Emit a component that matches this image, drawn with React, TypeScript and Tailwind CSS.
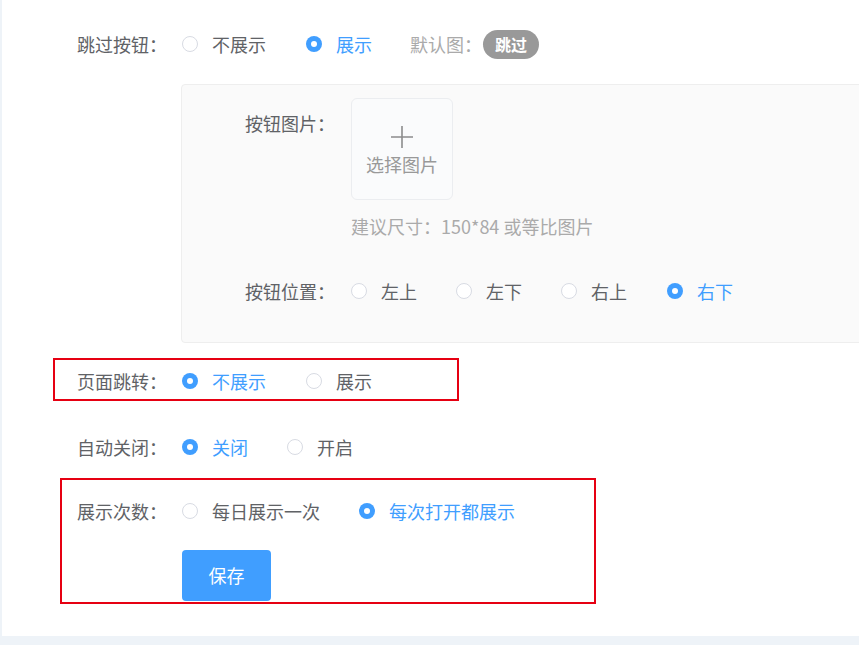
import React from "react";

const FONT = { fontFamily: '"Noto Sans CJK SC", "Noto Sans", sans-serif' };

function Radio({ checked, label }: { checked?: boolean; label: string }) {
  return (
    <div className="flex items-center">
      {checked ? (
        <span className="w-4 h-4 rounded-full bg-[#409eff] flex items-center justify-center">
          <span className="w-[6px] h-[6px] rounded-full bg-white" />
        </span>
      ) : (
        <span className="w-4 h-4 rounded-full border border-[#d8dbe3] bg-white" />
      )}
      <span className={`ml-[14px] text-[18px] leading-6 ${checked ? "text-[#409eff]" : "text-[#606266]"}`}>{label}</span>
    </div>
  );
}

function Row({ label, children }: { label: string; children: React.ReactNode }) {
  return (
    <div className="flex items-center h-10">
      <div className="w-[105px] text-[18px] text-[#606266]">{label}</div>
      {children}
    </div>
  );
}

export default function App() {
  return (
    <div className="w-[859px] h-[645px] bg-[#eef3f8] pl-[2px] pb-[9px]" style={FONT}>
      <div className="h-full bg-white overflow-hidden pl-[75px] pt-6">
        <Row label="跳过按钮：">
          <div className="flex items-center">
            <div className="w-[124px]"><Radio label="不展示" /></div>
            <div className="w-[104px]"><Radio checked label="展示" /></div>
            <span className="text-[18px] text-[#aaaaaa]">默认图：</span>
            <span className="ml-[1px] w-[56px] h-[29px] rounded-full bg-[#999999] text-white text-[16px] font-bold flex items-center justify-center">跳过</span>
          </div>
        </Row>

        <div className="ml-[104px] mt-5 -mr-4 h-[259px] bg-[#fafafa] border border-[#eeeeee] rounded-[4px] pl-[63px] pt-[13px]">
          <div className="flex">
            <div className="w-[106px] pt-[13px] text-[18px] leading-6 text-[#606266]">按钮图片：</div>
            <div>
              <div className="w-[102px] h-[102px] bg-[#fafbfc] border border-[#ebedf0] rounded-[6px] flex flex-col items-center justify-center">
                <svg width="24" height="24" viewBox="0 0 24 24" className="mt-[2px]">
                  <path d="M12 1v22M1 12h22" stroke="#8c8c8c" strokeWidth="1.6" />
                </svg>
                <span className="mt-[3px] text-[18px] leading-6 text-[#999999]">选择图片</span>
              </div>
              <div className="mt-[14px] text-[18px] leading-6 text-[#aaaaaa]">建议尺寸：150*84 或等比图片</div>
            </div>
          </div>
          <div className="flex items-center h-10 mt-[33px]">
            <div className="w-[106px] text-[18px] text-[#606266]">按钮位置：</div>
            <div className="w-[105px]"><Radio label="左上" /></div>
            <div className="w-[105px]"><Radio label="左下" /></div>
            <div className="w-[106px]"><Radio label="右上" /></div>
            <Radio checked label="右下" />
          </div>
        </div>

        <div className="relative mt-[18px]">
          <Row label="页面跳转：">
            <div className="w-[124px]"><Radio checked label="不展示" /></div>
            <Radio label="展示" />
          </Row>
          <div className="absolute left-[-24px] top-[-3px] w-[406px] h-[43px] border-2 border-[#e60012] pointer-events-none" />
        </div>

        <div className="mt-[26px]">
          <Row label="自动关闭：">
            <div className="w-[105px]"><Radio checked label="关闭" /></div>
            <Radio label="开启" />
          </Row>
        </div>

        <div className="relative mt-6">
          <Row label="展示次数：">
            <div className="w-[177px]"><Radio label="每日展示一次" /></div>
            <Radio checked label="每次打开都展示" />
          </Row>
          <button className="ml-[105px] mt-[19px] w-[89px] h-[51px] rounded-[4px] bg-[#409eff] text-white text-[18px] flex items-center justify-center">保存</button>
          <div className="absolute left-[-17px] top-[-13px] w-[536px] h-[126px] border-2 border-[#e60012] pointer-events-none" />
        </div>
      </div>
    </div>
  );
}
